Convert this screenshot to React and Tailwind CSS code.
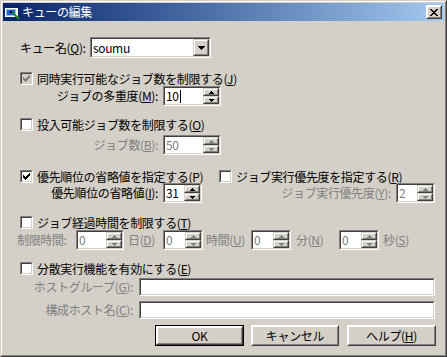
import React from "react";

// classic 3d frames
function Sunken({ className = "", inner = "bg-white", children }) {
  return (
    <div className={`border border-t-[#808080] border-l-[#808080] border-r-white border-b-white ${className}`}>
      <div className={`h-full w-full border border-t-[#404040] border-l-[#404040] border-r-[#d4d0c8] border-b-[#d4d0c8] ${inner}`}>
        {children}
      </div>
    </div>
  );
}

function Raised({ className = "", outer = "border-t-[#d4d0c8] border-l-[#d4d0c8]", children }) {
  return (
    <div className={`border ${outer} border-r-[#404040] border-b-[#404040] ${className}`}>
      <div className="flex h-full w-full items-center justify-center border border-t-white border-l-white border-r-[#808080] border-b-[#808080] bg-[#d4d0c8]">
        {children}
      </div>
    </div>
  );
}

const Arrow = ({ up, disabled }) => (
  <svg width="5" height="3" shapeRendering="crispEdges" className="block">
    {up ? (
      <g fill={disabled ? "#808080" : "#000"}>
        <rect x="2" y="0" width="1" height="1" />
        <rect x="1" y="1" width="3" height="1" />
        <rect x="0" y="2" width="5" height="1" />
      </g>
    ) : (
      <g fill={disabled ? "#808080" : "#000"}>
        <rect x="0" y="0" width="5" height="1" />
        <rect x="1" y="1" width="3" height="1" />
        <rect x="2" y="2" width="1" height="1" />
      </g>
    )}
  </svg>
);

function Spin({ value, className, disabled, caret }) {
  return (
    <Sunken className={`h-[20px] ${className}`}>
      <div className="flex h-full">
        <div className={`flex flex-1 items-center pl-[1px] ${disabled ? "text-[#808080]" : "text-black"}`}>
          {value}
          {caret && <span className="ml-[1px] inline-block h-[13px] w-[1px] bg-black" />}
        </div>
        <div className="flex w-[16px] flex-col">
          <Raised className="h-[8px]">
            <Arrow up disabled={disabled} />
          </Raised>
          <Raised className="h-[8px]">
            <Arrow disabled={disabled} />
          </Raised>
        </div>
      </div>
    </Sunken>
  );
}

function Check({ checked, disabled }) {
  return (
    <Sunken className="h-[13px] w-[13px] shrink-0" inner={disabled ? "bg-[#d4d0c8]" : "bg-white"}>
      {checked && (
        <svg width="9" height="9" shapeRendering="crispEdges" className="block">
          <g fill={disabled ? "#808080" : "#000"} transform="translate(1 1)">
            <rect x="6" y="0" width="1" height="1" />
            <rect x="5" y="1" width="2" height="1" />
            <rect x="0" y="2" width="1" height="1" />
            <rect x="4" y="2" width="3" height="1" />
            <rect x="0" y="3" width="2" height="1" />
            <rect x="3" y="3" width="3" height="1" />
            <rect x="0" y="4" width="5" height="1" />
            <rect x="1" y="5" width="3" height="1" />
            <rect x="2" y="6" width="1" height="1" />
          </g>
        </svg>
      )}
    </Sunken>
  );
}

const CheckRow = ({ checked, disabled, children, className = "" }) => (
  <div className={`flex h-[13px] items-center gap-[4px] ${className}`}>
    <Check checked={checked} disabled={disabled} />
    <span className="whitespace-nowrap">{children}</span>
  </div>
);

const grey = "text-[#808080]";

function TitleIcon() {
  return (
    <svg width="16" height="16" shapeRendering="crispEdges" className="block">
      <rect x="0" y="1" width="14" height="12" fill="#fff" stroke="#0a246a" />
      <rect x="1" y="2" width="13" height="2" fill="#0a246a" />
      <rect x="2" y="5" width="9" height="6" fill="#1c5cd8" stroke="#a0c0f0" />
      <path d="M8 8 L15 15" stroke="#1a8a1a" strokeWidth="2" shapeRendering="auto" />
      <rect x="6" y="7" width="2" height="2" fill="#000" />
    </svg>
  );
}

function CloseX() {
  const rows = [
    [0, 2, 6, 2],
    [1, 2, 5, 2],
    [2, 4],
    [3, 2],
    [2, 4],
    [1, 2, 5, 2],
    [0, 2, 6, 2],
  ];
  return (
    <svg width="8" height="7" shapeRendering="crispEdges" className="block">
      {rows.map((r, y) => (
        <g key={y}>
          <rect x={r[0]} y={y} width={r[1]} height="1" />
          {r.length > 2 && <rect x={r[2]} y={y} width={r[3]} height="1" />}
        </g>
      ))}
    </svg>
  );
}

export default function App() {
  return (
    <div className="h-[357px] w-[447px] border border-t-[#d4d0c8] border-l-[#d4d0c8] border-r-[#404040] border-b-[#404040] font-['Noto_Sans_CJK_JP',sans-serif] text-[12px] leading-[14px] tracking-[-0.35px] text-black">
      <div className="flex h-full w-full flex-col border border-t-white border-l-white border-r-[#808080] border-b-[#808080] bg-[#d4d0c8] p-[1px]">
        {/* title bar */}
        <div className="flex h-[18px] items-center bg-linear-to-r from-[#0a246a] to-[#a6caf0] pl-[1px] pr-[2px]">
          <TitleIcon />
          <span className="ml-[2px] text-white">キューの編集</span>
          <Raised className="ml-auto h-[14px] w-[16px]" outer="border-t-white border-l-white">
            <CloseX />
          </Raised>
        </div>

        {/* body */}
        <div className="flex flex-col pl-[17px]">
          <div className="mt-[16px] flex h-[21px] items-center">
            <span className="w-[70px] whitespace-nowrap">キュー名(<u>Q</u>):</span>
            <Sunken className="h-[21px] w-[121px]">
              <div className="flex h-full items-center">
                <span className="flex-1 pl-[1px]">soumu</span>
                <Raised className="h-[17px] w-[16px]" outer="border-t-[#d4d0c8] border-l-[#d4d0c8]">
                  <svg width="7" height="4" shapeRendering="crispEdges" className="block">
                    <rect x="0" y="0" width="7" height="1" />
                    <rect x="1" y="1" width="5" height="1" />
                    <rect x="2" y="2" width="3" height="1" />
                    <rect x="3" y="3" width="1" height="1" />
                  </svg>
                </Raised>
              </div>
            </Sunken>
          </div>

          <CheckRow checked disabled className="mt-[14px]">
            同時実行可能なジョブ数を制限する(<u>J</u>)
          </CheckRow>
          <div className="mt-[1px] flex h-[20px] items-center">
            <span className="w-[138px] whitespace-nowrap text-right">ジョブの多重度(<u>M</u>):</span>
            <Spin value="10" caret className="ml-[5px] w-[58px]" />
          </div>

          <CheckRow className="mt-[12px]">投入可能ジョブ数を制限する(<u>O</u>)</CheckRow>
          <div className="mt-[4px] flex h-[20px] items-center">
            <span className={`w-[138px] whitespace-nowrap text-right ${grey}`}>ジョブ数(<u>B</u>):</span>
            <Spin value="50" disabled className="ml-[5px] w-[58px]" />
          </div>

          <div className="mt-[15px] flex">
            <CheckRow checked className="w-[199px]">優先順位の省略値を指定する(<u>P</u>)</CheckRow>
            <CheckRow>ジョブ実行優先度を指定する(<u>R</u>)</CheckRow>
          </div>
          <div className="flex h-[20px] items-center">
            <span className="w-[138px] whitespace-nowrap text-right">優先順位の省略値(<u>I</u>):</span>
            <Spin value="31" className="ml-[5px] w-[39px]" />
            <span className={`w-[189px] whitespace-nowrap text-right ${grey}`}>ジョブ実行優先度(<u>Y</u>):</span>
            <Spin value="2" disabled className="ml-[5px] w-[39px]" />
          </div>

          <CheckRow className="mt-[13px]">ジョブ経過時間を制限する(<u>T</u>)</CheckRow>
          <div className={`-ml-[3px] mt-[1px] flex h-[20px] items-center ${grey}`}>
            <span className="w-[59px] whitespace-nowrap">制限時間:</span>
            <Spin value="0" disabled className="w-[48px]" />
            <span className="w-[39px] whitespace-nowrap pl-[4px]">日(<u>D</u>)</span>
            <Spin value="0" disabled className="w-[40px]" />
            <span className="w-[48px] whitespace-nowrap pl-[3px]">時間(<u>U</u>)</span>
            <Spin value="0" disabled className="w-[40px]" />
            <span className="w-[48px] whitespace-nowrap pl-[5px]">分(<u>N</u>)</span>
            <Spin value="0" disabled className="w-[40px]" />
            <span className="whitespace-nowrap pl-[4px]">秒(<u>S</u>)</span>
          </div>

          <CheckRow className="mt-[12px]">分散実行機能を有効にする(<u>E</u>)</CheckRow>
          <div className="mt-[3px] flex h-[18px] items-center">
            <span className={`w-[113px] whitespace-nowrap text-right ${grey}`}>ホストグループ(<u>G</u>):</span>
            <Sunken className="ml-[6px] h-[18px] w-[296px]" />
          </div>
          <div className="mt-[5px] flex h-[18px] items-center">
            <span className={`w-[113px] whitespace-nowrap text-right ${grey}`}>構成ホスト名(<u>C</u>):</span>
            <Sunken className="ml-[6px] h-[18px] w-[296px]" />
          </div>

          <div className="ml-[135px] mt-[6px] flex h-[21px]">
            <div className="h-[21px] w-[89px] border border-black">
              <Raised className="h-full w-full" outer="border-t-white border-l-white">OK</Raised>
            </div>
            <Raised className="ml-[7px] h-[21px] w-[88px]" outer="border-t-white border-l-white">
              キャンセル
            </Raised>
            <Raised className="ml-[8px] h-[21px] w-[89px]" outer="border-t-white border-l-white">
              ヘルプ(<u>H</u>)
            </Raised>
          </div>
        </div>
      </div>
    </div>
  );
}
